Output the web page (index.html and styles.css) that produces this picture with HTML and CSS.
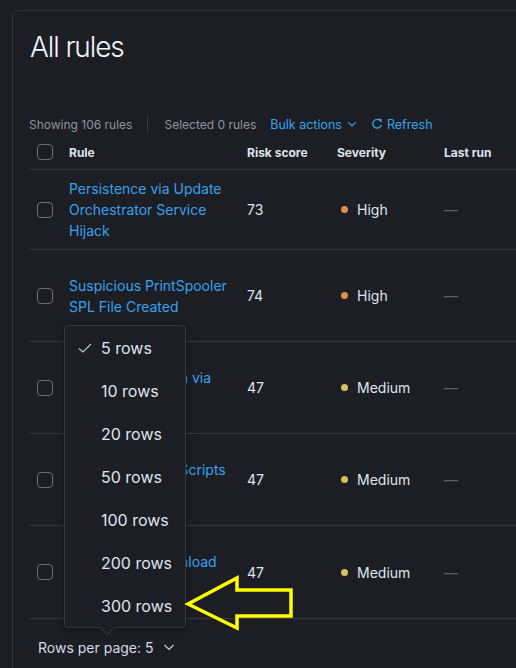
FILE: index.html
```html
<!DOCTYPE html>
<html>
<head>
<meta charset="utf-8">
<link rel="stylesheet" href="styles.css">
</head>
<body>
<div class="page">
  <div class="panel">
    <h1 class="title">All rules</h1>
    <div class="toolbar">
      <span class="muted">Showing 106 rules</span>
      <span class="divider"></span>
      <span class="muted">Selected 0 rules</span>
      <span class="link">Bulk actions
        <svg class="chev" width="10" height="10" viewBox="0 0 10 10"><path d="M1.5 3.5 L5 7 L8.5 3.5" fill="none" stroke="currentColor" stroke-width="1.1"/></svg>
      </span>
      <span class="link refresh">
        <svg width="12" height="12" viewBox="0 0 12 12"><path d="M9.6 3.2 A4.3 4.3 0 1 0 10.3 6.8" fill="none" stroke="currentColor" stroke-width="1.3"/><path d="M7.6 1.2 L10.2 1.6 L9.8 4.2" fill="none" stroke="currentColor" stroke-width="1.3"/></svg>
        Refresh
      </span>
    </div>
    <div class="table">
      <div class="row head">
        <div class="cb-cell"><span class="cb"></span></div>
        <div class="c-rule">Rule</div>
        <div class="c-risk">Risk score</div>
        <div class="c-sevh">Severity</div>
        <div class="c-last">Last run</div>
      </div>
      <div class="row r1">
        <div class="cb-cell"><span class="cb"></span></div>
        <div class="c-rule"><span class="rlink">Persistence via Update Orchestrator Service Hijack</span></div>
        <div class="c-risk">73</div>
        <div class="c-sev"><span class="dot high"></span>High</div>
        <div class="c-last"><span class="dash">—</span></div>
      </div>
      <div class="row">
        <div class="cb-cell"><span class="cb"></span></div>
        <div class="c-rule"><span class="rlink">Suspicious PrintSpooler SPL File Created</span></div>
        <div class="c-risk">74</div>
        <div class="c-sev"><span class="dot high"></span>High</div>
        <div class="c-last"><span class="dash">—</span></div>
      </div>
      <div class="row">
        <div class="cb-cell"><span class="cb"></span></div>
        <div class="c-rule"><span class="rlink">Remote Execution via File Shares</span></div>
        <div class="c-risk">47</div>
        <div class="c-sev"><span class="dot med"></span>Medium</div>
        <div class="c-last"><span class="dash">—</span></div>
      </div>
      <div class="row">
        <div class="cb-cell"><span class="cb"></span></div>
        <div class="c-rule"><span class="rlink">Windows Logon Scripts Modified</span></div>
        <div class="c-risk">47</div>
        <div class="c-sev"><span class="dot med"></span>Medium</div>
        <div class="c-last"><span class="dash">—</span></div>
      </div>
      <div class="row last">
        <div class="cb-cell"><span class="cb"></span></div>
        <div class="c-rule"><span class="rlink">Remote File Download via PowerShell</span></div>
        <div class="c-risk">47</div>
        <div class="c-sev"><span class="dot med"></span>Medium</div>
        <div class="c-last"><span class="dash">—</span></div>
      </div>
    </div>
    <div class="footer">
      <span class="rpp">Rows per page: 5
        <svg class="chev2" width="12" height="12" viewBox="0 0 12 12"><path d="M1.5 4 L6 8.5 L10.5 4" fill="none" stroke="currentColor" stroke-width="1.2"/></svg>
      </span>
    </div>
  </div>

  <div class="menu">
    <div class="item"><svg class="check" width="14" height="12" viewBox="0 0 14 12"><path d="M1 6.5 L5 10 L13 2" fill="none" stroke="currentColor" stroke-width="1.1"/></svg>5 rows</div>
    <div class="item">10 rows</div>
    <div class="item">20 rows</div>
    <div class="item">50 rows</div>
    <div class="item">100 rows</div>
    <div class="item">200 rows</div>
    <div class="item">300 rows</div>
    <span class="menu-arrow"></span>
  </div>

  <svg class="yarrow" width="120" height="70" viewBox="0 0 120 70">
    <path d="M8 29 L57 3 L57 15 L111 15 L111 41 L57 41 L57 53 Z" fill="none" stroke="#ffff00" stroke-width="3.5" stroke-linejoin="miter"/>
  </svg>
</div>
</body>
</html>
```

FILE: styles.css
```css
html, body {
  margin: 0;
  padding: 0;
  background: #1d1e24;
  overflow: hidden;
}
body {
  font-family: Inter, "Noto Sans", sans-serif;
  color: #dfe5ef;
  width: 516px;
  height: 668px;
}
.page {
  position: relative;
  padding: 10px 0 0 12px;
  height: 658px;
  overflow: hidden;
}
.panel {
  width: 600px;
  height: 700px;
  border: 1px solid #33353d;
  border-radius: 6px;
  background: #1d1e24;
  padding: 19px 0 0 16px;
  box-sizing: border-box;
}
.title {
  margin: 0;
  font-size: 28px;
  line-height: 34px;
  font-weight: 300;
  letter-spacing: -1.1px;
  color: #f1f4fa;
  padding-left: 1px;
}
.toolbar {
  margin-top: 50px;
  height: 20px;
  display: flex;
  align-items: center;
  font-size: 12px;
}
.muted { color: #8e949f; }
.divider {
  width: 1px;
  height: 18px;
  background: #3a3c45;
  margin: 0 16px 0 15px;
}
.link {
  color: #36a2ef;
  margin-left: 14px;
  display: flex;
  align-items: center;
  font-size: 12.5px;
}
.chev { margin-left: 5px; }
.refresh { margin-left: 14px; }
.refresh svg { margin-right: 4px; }

.table { margin-top: 1px; }
.row {
  display: grid;
  grid-template-columns: 40px 178px 90px 107px 1fr;
  align-items: center;
  height: 92px;
  box-sizing: border-box;
  border-bottom: 1px solid #343741;
  font-size: 14px;
  line-height: 21px;
}
.row.head {
  height: 35px;
  font-weight: 700;
  font-size: 12px;
  color: #dfe5ef;
}
.row.r1 { height: 80px; }
.row.last { height: 93px; }
.cb-cell { padding-left: 8px; display: flex; align-items: center; }
.cb {
  width: 14px;
  height: 14px;
  border: 1px solid #6a6f7a;
  border-radius: 4px;
  display: block;
}
.c-rule { padding-right: 16px; }
.rlink { color: #36a2ef; }
.c-sev { display: flex; align-items: center; padding-left: 4px; }
.dot {
  width: 7px;
  height: 7px;
  border-radius: 50%;
  margin-right: 9px;
}
.dot.high { background: #e18d4c; }
.dot.med { background: #d9c15a; }
.dash { color: #5b606c; }

.footer {
  height: 56px;
  display: flex;
  align-items: center;
  padding-left: 9px;
  font-size: 14px;
}
.rpp { display: flex; align-items: center; color: #d5dbe6; }
.chev2 { margin-left: 10px; color: #c9ced8; }

.menu {
  position: absolute;
  left: 64px;
  top: 325px;
  width: 120px;
  background: #1d1e24;
  border: 1px solid #343741;
  border-radius: 4px;
  box-shadow: 0 2px 6px rgba(0,0,0,0.35);
}
.item {
  height: 43px;
  display: flex;
  align-items: center;
  padding-left: 36px;
  font-size: 16px;
  color: #dfe5ef;
  position: relative;
}
.check {
  position: absolute;
  left: 13px;
  top: 16px;
  color: #c5cad3;
}
.menu-arrow {
  position: absolute;
  left: 37px;
  bottom: -6px;
  width: 10px;
  height: 10px;
  background: #1d1e24;
  border-right: 1px solid #343741;
  border-bottom: 1px solid #343741;
  transform: rotate(45deg);
}
.yarrow {
  position: absolute;
  left: 180px;
  top: 575px;
}
```
